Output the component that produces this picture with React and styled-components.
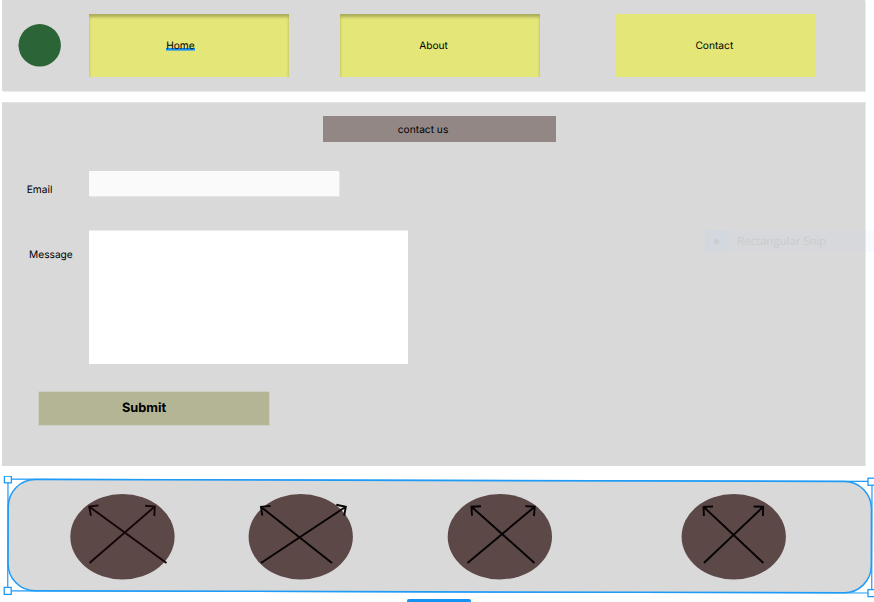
import React from "react";
import styled, { createGlobalStyle, css } from "styled-components";

const GlobalStyle = createGlobalStyle`
  * { box-sizing: border-box; }
  body { margin: 0; background: #fff; overflow: hidden; }
`;

const Page = styled.div`
  position: relative;
  width: 874px;
  height: 602px;
  overflow: hidden;
  background: #fff;
  color: #000;
  font-family: Inter, "Liberation Sans", sans-serif;
  font-size: 10.2px;
  line-height: 14px;
  text-rendering: geometricPrecision;
`;

const NavBar = styled.nav`
  display: flex;
  align-items: flex-start;
  width: 863px;
  height: 91px;
  margin-left: 2px;
  padding: 14px 0 0 16px;
  background: #d9d9d9;
  box-shadow: 1px 1px 0 #ebebeb;
`;

const Logo = styled.svg`
  flex: none;
  width: 43px;
  height: 43px;
  margin: 10px 28px 0 0;
`;

const NavItem = styled.a`
  width: 200px;
  height: 63px;
  margin-right: ${(p) => p.$gap}px;
  padding: 25px 0 0 ${(p) => p.$indent}px;
  background: #e4e678;
  ${(p) =>
    p.$pressed &&
    css`
      box-shadow: inset 0 3px 3px rgba(0, 0, 0, 0.25);
    `}
`;

const NavText = styled.span`
  display: block;
  width: max-content;
  height: 11px;
  ${(p) =>
    p.$active &&
    css`
      background: linear-gradient(#1593f0, #1593f0) 0 9px / 100% 2px no-repeat;
      box-shadow: 0 0.6px 0 #1593f0;
    `}
`;

const ContactPanel = styled.main`
  width: 863px;
  height: 364px;
  margin: 11px 0 0 2px;
  padding-top: 13px;
  border-top: 1px solid #e2e2e2;
  background: #d9d9d9;
  box-shadow: 1px 0 0 #ebebeb;
`;

const Heading = styled.h1`
  width: 233px;
  height: 26px;
  margin: 0 0 29px 321px;
  padding: 7px 0 0 74.8px;
  background: #938786;
  font: inherit;
`;

const Field = styled.div`
  display: flex;
  align-items: flex-start;
  margin-bottom: ${(p) => p.$after}px;
`;

const Label = styled.label`
  width: 87px;
  padding: ${(p) => p.$top}px 0 0 ${(p) => p.$left}px;
`;

const EmailInput = styled.div`
  width: 250px;
  height: 25px;
  background: #fafafa;
  box-shadow: 1px 1px 0 #e6e6e6;
`;

const MessageInput = styled.div`
  width: 319px;
  height: 133px;
  background: #fff;
  box-shadow: 0 -1px 0 #ebebeb;
`;

const SubmitButton = styled.button`
  display: block;
  width: 230px;
  height: 33px;
  margin-left: 37px;
  padding: 1px 20px 0 0;
  border: 0;
  background: #b4b594;
  box-shadow: 0 0 0 0.5px #c4c5b2;
  color: #000;
  font: 700 12.8px/32px Inter, "Liberation Sans", sans-serif;
  text-rendering: geometricPrecision;
`;

const Footer = styled.footer`
  position: relative;
  display: flex;
  height: 124px;
  margin-top: 10px;
  padding: 18px 0 0 70px;
`;

const Selection = styled.svg`
  position: absolute;
  inset: 0;
  width: 874px;
  height: 124px;
`;

const SocialSvg = styled.svg`
  position: relative;
  flex: none;
  width: 105px;
  height: 86px;
  margin-right: ${(p) => p.$gap}px;
  overflow: visible;
`;

const SizeBadge = styled.div`
  position: absolute;
  left: 406.5px;
  top: 599px;
  width: 64px;
  height: 18px;
  border-radius: 2px;
  background: #1593f5;
`;

const GhostMenu = styled.div`
  position: absolute;
  left: 705px;
  top: 230px;
  display: flex;
  width: 169px;
  height: 22px;
  background: rgba(200, 220, 245, 0.1);
  color: #cbcccd;
  font: 11.4px/23px "Open Sans", "Noto Sans", sans-serif;
`;

const GhostMark = styled.span`
  display: grid;
  place-items: center;
  width: 22px;
  margin-right: 10px;
  background: rgba(190, 220, 240, 0.16);
  &::before {
    content: "";
    width: 5px;
    height: 5px;
    border-radius: 50%;
    background: #cbcdcf;
  }
`;

const icons = [
  {
    gap: 73,
    shift: 0.3,
    color: "#150508",
    d: "M96.2 69L18.9 12.6M28.3 11.4L18.9 12.6L20.7 21.7M19.2 69L84.5 12.5M74.8 11.7L84.5 12.5L84 22",
  },
  {
    gap: 94,
    shift: 0.6,
    color: "#050303",
    d: "M83.4 69L12.4 12.9M22 11.9L12.4 12.9L13.7 21.7M12.4 69L97.2 12.7M87.7 10.7L97.2 12.7L95.6 21.7",
  },
  {
    gap: 129,
    shift: 0.7,
    color: "#050303",
    d: "M86.8 69L23.8 12.7M33.3 12.2L23.8 12.7L24.3 21.8M19.8 69L87 12.7M77.6 12.1L87 12.7L86.3 22",
  },
  {
    gap: 0,
    shift: 0.6,
    color: "#050303",
    d: "M81.8 69L22 12.8M31.4 12.5L22 12.8L22.3 22M22.3 69L81.6 12.8M72 12.5L81.6 12.8L81.3 22",
  },
];

function CrossedArrows({ gap, shift, color, d }) {
  return (
    <SocialSvg $gap={gap} viewBox="0 0 105 86" aria-hidden="true">
      <g transform={`translate(${shift} 0)`}>
        <ellipse cx="52.15" cy="42.7" rx="52.15" ry="42.7" fill="#5d4848" />
        <path d={d} fill="none" stroke={color} strokeWidth="1.9" />
      </g>
    </SocialSvg>
  );
}

export default function App() {
  return (
    <Page>
      <GlobalStyle />
      <NavBar>
        <Logo viewBox="0 0 43 43" aria-hidden="true">
          <circle cx="21.7" cy="21.3" r="21.2" fill="#2a6437" />
        </Logo>
        <NavItem $pressed $gap={50.5} $indent={77.2}>
          <NavText $active>Home</NavText>
        </NavItem>
        <NavItem $pressed $gap={75.5} $indent={79.7}>
          <NavText>About</NavText>
        </NavItem>
        <NavItem $gap={0} $indent={80.4}>
          <NavText>Contact</NavText>
        </NavItem>
      </NavBar>

      <ContactPanel>
        <Heading>contact us</Heading>
        <Field $after={34}>
          <Label $top={12} $left={24.7}>Email</Label>
          <EmailInput />
        </Field>
        <Field $after={28}>
          <Label $top={17} $left={27}>Message</Label>
          <MessageInput />
        </Field>
        <SubmitButton>Submit</SubmitButton>
      </ContactPanel>

      <Footer>
        <Selection viewBox="0 476 874 124" aria-hidden="true">
          <g fill="none" stroke="#1e9bf7">
            <g transform="rotate(0.14 8 479.5)">
              <rect x="8" y="479.2" width="864" height="111.7" strokeWidth="1.2" />
              <rect x="8.3" y="479.5" width="863.2" height="111.2" rx="27" fill="#d9d9d9" strokeWidth="1.5" />
            </g>
            <g fill="#fff" strokeWidth="1.3">
              <rect x="4.4" y="476.2" width="7" height="6.6" />
              <rect x="868" y="478.2" width="7" height="7" />
              <rect x="4.2" y="587.4" width="7" height="7" />
              <rect x="868" y="589.6" width="7" height="7" />
            </g>
          </g>
        </Selection>
        {icons.map((icon) => (
          <CrossedArrows key={icon.d} {...icon} />
        ))}
      </Footer>
      <SizeBadge />
      <GhostMenu>
        <GhostMark />
        Rectangular Snip
      </GhostMenu>
    </Page>
  );
}
